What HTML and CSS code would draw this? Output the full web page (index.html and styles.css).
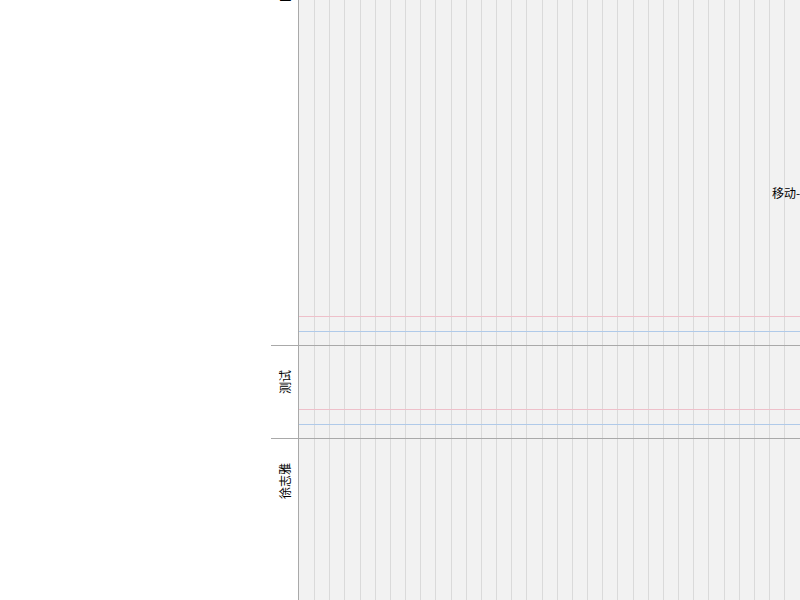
FILE: index.html
```html
<!DOCTYPE html>
<html lang="zh">
<head>
    <meta charset="UTF-8">
    <meta name="viewport" content="width=device-width, initial-scale=1.0">
    <title>排期</title>
    <link rel="stylesheet" href="styles.css">
</head>
<body>

<div class="chart">
    <!-- 日期网格 -->
    <div class="days">
        <span></span><span></span><span></span><span></span><span></span><span></span><span></span><span></span>
        <span></span><span></span><span></span><span></span><span></span><span></span><span></span><span></span>
        <span></span><span></span><span></span><span></span><span></span><span></span><span></span><span></span>
        <span></span><span></span><span></span><span></span><span></span><span></span><span></span><span></span>
        <span></span><span></span><span></span><span></span>
    </div>

    <div class="row row-first">
        <div class="head"><span class="label">国际化</span></div>
        <div class="lane">
            <div class="task">移动-端应用开发</div>
            <div class="marks"></div>
        </div>
    </div>

    <div class="row row-mid">
        <div class="head"><span class="label">测试</span></div>
        <div class="lane">
            <div class="marks"></div>
        </div>
    </div>

    <div class="row row-last">
        <div class="head"><span class="label">徐志雅</span></div>
        <div class="lane"></div>
    </div>
</div>

</body>
</html>
```

FILE: styles.css
```css
html, body {
    margin: 0;
    padding: 0;
    overflow: hidden;
    background: #fff;
}
body {
    font-family: "Noto Sans CJK SC", "Noto Sans", sans-serif;
    font-size: 12px;
    color: #000;
}
.chart {
    position: relative;
    width: 1200px;
    margin-left: 271px;
    margin-top: -58px;
}
.days {
    position: absolute;
    top: 0;
    bottom: 0;
    left: 28px;
    right: 0;
    z-index: 0;
    display: flex;
    padding-left: 15px;
    background: #f2f2f2;
}
.days span {
    flex: 0 0 15.185px;
    box-sizing: border-box;
    border-left: 1px solid #dadada;
}
.row {
    position: relative;
    z-index: 1;
    display: flex;
    border-bottom: 1px solid #a9a9a9;
}
.row-first {
    height: 403px;
}
.row-mid {
    height: 92px;
}
.row-last {
    height: 300px;
    border-bottom: none;
}
.head {
    width: 27px;
    flex-shrink: 0;
    display: flex;
    justify-content: center;
    align-items: flex-start;
    padding-top: 24px;
    box-sizing: border-box;
    background: #fff;
}
.label {
    writing-mode: vertical-rl;
    text-orientation: sideways;
    transform: rotate(180deg);
    line-height: 14px;
    white-space: nowrap;
}
.lane {
    position: relative;
    flex: 1;
    display: flex;
    flex-direction: column;
    justify-content: flex-end;
    padding-bottom: 13px;
    border-left: 1px solid #a9a9a9;
}
.marks {
    height: 16px;
    box-sizing: border-box;
    border-top: 1px solid #eec0ca;
    border-bottom: 1px solid #b0cae9;
}
.task {
    position: absolute;
    top: 245px;
    left: 473px;
    line-height: 12px;
    white-space: nowrap;
}
```
